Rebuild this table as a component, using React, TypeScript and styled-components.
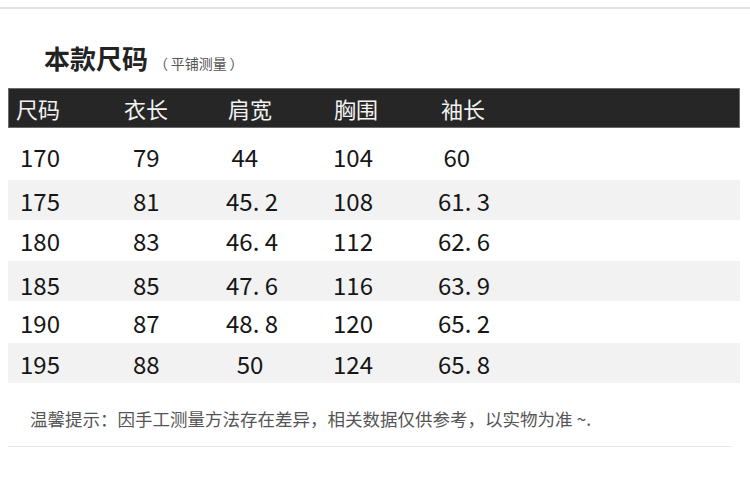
import React from "react";
import styled, { createGlobalStyle } from "styled-components";

const Global = createGlobalStyle`
  html, body { margin: 0; padding: 0; background: #ffffff; }
  body { font-family: "Noto Sans CJK SC", "Noto Sans", sans-serif; color: #222; }
`;

const Page = styled.div`
  width: 750px;
  height: 481px;
  overflow: hidden;
  background: #fff;
`;

const TopRule = styled.div`
  margin-top: 7px;
  height: 2px;
  background: #e2e2e2;
`;

const TitleRow = styled.div`
  display: flex;
  align-items: baseline;
  gap: 6px;
  margin-top: 33px;
  padding-left: 44px;
`;

const Title = styled.h1`
  margin: 0;
  font-size: 26px;
  line-height: 31px;
  font-weight: 700;
  color: #222;
`;

const SubTitle = styled.span`
  font-size: 14px;
  color: #555;
  white-space: pre;
`;

const Table = styled.div`
  margin: 15px 0 0 8px;
  width: 732px;
  display: flex;
  flex-direction: column;
`;

const HeaderRow = styled.div`
  display: grid;
  grid-template-columns: 108px 104px 106px 107px 1fr;
  align-items: center;
  box-sizing: border-box;
  height: 40px;
  padding-left: 7px;
  background: #262626;
  border: 1px solid #6a6a6a;
`;

const HeadCell = styled.div`
  font-size: 22px;
  line-height: 1;
  color: #f2f2f2;
`;

const DataRow = styled.div<{ $h: number; $shift: number; $alt: boolean }>`
  display: grid;
  grid-template-columns: 113px 93px 107px 105px 1fr;
  align-items: center;
  box-sizing: border-box;
  height: ${(p) => p.$h}px;
  padding-left: 12px;
  padding-top: ${(p) => p.$shift}px;
  background: ${(p) => (p.$alt ? "#f2f2f2" : "#ffffff")};
`;

const Cell = styled.div`
  font-size: 24px;
  line-height: 1;
  color: #161616;
  white-space: pre;
`;

const Note = styled.p`
  margin: 24px 0 0 0;
  padding-left: 30px;
  font-size: 17.5px;
  line-height: 24px;
  color: #555;
`;

const BottomRule = styled.div`
  margin: 15px 0 0 8px;
  width: 724px;
  height: 1px;
  background: #e8e8e8;
`;

const headers = ["尺码", "衣长", "肩宽", "胸围", "袖长"];

const rows: { cells: string[]; h: number; shift: number }[] = [
  { cells: ["170", "79", " 44", "104", " 60"], h: 52, shift: 6 },
  { cells: ["175", "81", "45. 2", "108", "61. 3"], h: 40, shift: 2 },
  { cells: ["180", "83", "46. 4", "112", "62. 6"], h: 41, shift: 0 },
  { cells: ["185", "85", "47. 6", "116", "63. 9"], h: 40, shift: 8 },
  { cells: ["190", "87", "48. 8", "120", "65. 2"], h: 42, shift: 2 },
  { cells: ["195", "88", "  50", "124", "65. 8"], h: 40, shift: 2 },
];

export default function App() {
  return (
    <Page>
      <Global />
      <TopRule />
      <TitleRow>
        <Title>本款尺码</Title>
        <SubTitle>{"（\u2009平铺测量\u2009）"}</SubTitle>
      </TitleRow>
      <Table>
        <HeaderRow>
          {headers.map((h) => (
            <HeadCell key={h}>{h}</HeadCell>
          ))}
        </HeaderRow>
        {rows.map((r, i) => (
          <DataRow key={r.cells[0]} $h={r.h} $shift={r.shift} $alt={i % 2 === 1}>
            {r.cells.map((c, j) => (
              <Cell key={j}>{c}</Cell>
            ))}
          </DataRow>
        ))}
      </Table>
      <Note>温馨提示：因手工测量方法存在差异，相关数据仅供参考，以实物为准 ~.</Note>
      <BottomRule />
    </Page>
  );
}
